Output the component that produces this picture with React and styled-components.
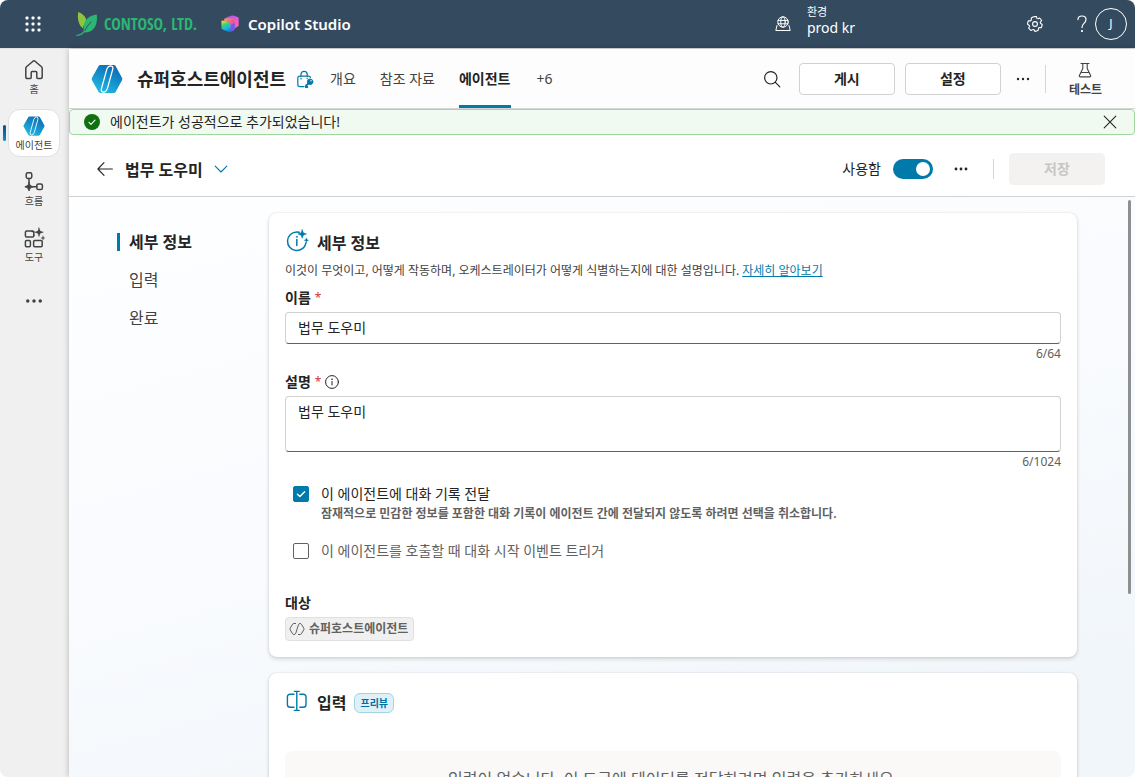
import { useState } from "react"
import styled, { createGlobalStyle } from "styled-components"

const GlobalStyle = createGlobalStyle`
  * {
    box-sizing: border-box;
  }

  body {
    margin: 0;
    background: #fff;
    color: #242424;
    font-family: "Noto Sans", "Noto Sans CJK KR", sans-serif;
    font-size: 14px;
    line-height: 20px;
  }

  button, input, textarea {
    font: inherit;
    color: inherit;
  }

  svg {
    display: block;
    flex: none;
  }
`

/* ---------- icons ---------- */

const Icon = ({ size = 20, box = 20, width = 1.2, children }) => (
  <svg
    width={size}
    height={size}
    viewBox={`0 0 ${box} ${box}`}
    fill='none'
    stroke='currentColor'
    strokeWidth={width}
    strokeLinecap='round'
    strokeLinejoin='round'
    aria-hidden='true'
  >
    {children}
  </svg>
)

const WaffleIcon = () => (
  <svg width='18' height='18' viewBox='0 0 18 18' fill='#fff' aria-hidden='true'>
    {[3, 9, 15].map((y) =>
      [3, 9, 15].map((x) => <rect key={`${x}-${y}`} x={x - 1.5} y={y - 1.5} width='3' height='3' rx='1' />)
    )}
  </svg>
)

const LeafLogo = () => (
  <svg width='22' height='26' viewBox='0 0 22 26' aria-hidden='true'>
    <path d='M2.2 1C7.5 3 10.8 6.6 10.4 11.2C8.3 13 7.2 15 6.7 17.2C2.3 13.4 1.2 7.4 2.2 1Z' fill='#8cc63f' />
    <path d='M20.8 3.6C21.8 12.8 18.8 21.4 9.6 21.4C8.9 21.4 8.4 21.3 7.9 21.1C6 13 10.4 4.4 20.8 3.6Z' fill='#2bb673' />
    <path d='M15.4 10.6C12.4 13.4 10.2 17 8.3 20.4' fill='none' stroke='#344a5f' strokeWidth='0.9' />
    <path d='M8.6 20.2C6.8 22.8 4.4 24.2 1 24.4' fill='none' stroke='#2bb673' strokeWidth='1.3' strokeLinecap='round' />
  </svg>
)

const CopilotLogo = () => (
  <svg width='18' height='18' viewBox='0 0 18 18' aria-hidden='true'>
    <defs>
      <linearGradient id='cpPink' x1='0' y1='0' x2='1' y2='1'>
        <stop offset='0' stopColor='#8b5cf6' />
        <stop offset='0.6' stopColor='#e85bd0' />
        <stop offset='1' stopColor='#ff6a8b' />
      </linearGradient>
      <linearGradient id='cpMid' x1='0' y1='0' x2='1' y2='1'>
        <stop offset='0' stopColor='#ff9b5c' />
        <stop offset='0.5' stopColor='#f5588f' />
        <stop offset='1' stopColor='#b44bea' />
      </linearGradient>
      <linearGradient id='cpFront' x1='0.3' y1='0' x2='0.7' y2='1'>
        <stop offset='0' stopColor='#f2d23c' />
        <stop offset='0.35' stopColor='#35d07f' />
        <stop offset='0.65' stopColor='#18b9e6' />
        <stop offset='1' stopColor='#1479e0' />
      </linearGradient>
    </defs>
    <path d='M5.4 2.2L11 0.6Q12 0.3 12.9 0.7L16.6 1.9Q17.7 2.3 17.7 3.4V10Q17.7 11 16.8 11.6L13.6 13.6L5 7Z' fill='url(#cpPink)' />
    <path d='M3.2 4.4Q3.5 3.4 4.6 3.3H11.4Q13.4 3.5 13.8 5.4V13.4L9 15L3 8Z' fill='url(#cpMid)' />
    <path d='M9.6 9.6V16Q9.6 17.3 8.8 17.3L12.8 15.4Q13.8 14.8 13.8 13.4V8.2Z' fill='#7a55f0' />
    <path d='M1.8 5.6L5.6 6.4Q9.4 7.2 9.6 9.6V16Q9.6 17.6 8.2 17.1L1.6 14.4Q0.4 13.9 0.4 12.6V6.8Q0.4 5.3 1.8 5.6Z' fill='url(#cpFront)' />
  </svg>
)

const HexLogo = ({ size }) => (
  <svg width={size} height={size} viewBox='0 0 32 32' aria-hidden='true'>
    <defs>
      <linearGradient id='hexFill' x1='0.8' y1='0' x2='0.25' y2='1'>
        <stop offset='0' stopColor='#0d66b0' />
        <stop offset='0.5' stopColor='#1490cb' />
        <stop offset='1' stopColor='#22bde4' />
      </linearGradient>
    </defs>
    <path d='M9.4 2H22.8Q24 2 24.6 3.1L31 14.8Q31.7 16 31 17.2L24.6 28.9Q24 30 22.8 30H9.4Q8.2 30 7.6 28.9L1 17.2Q0.3 16 1 14.8L7.6 3.1Q8.2 2 9.4 2Z' fill='url(#hexFill)' />
    <path
      d='M15.8 6.4Q17 2.8 19.8 2.8Q22.6 3 21.7 6.4L16.4 25.4Q15.2 29 12.4 29.2Q9.6 29 10.5 25.4Z'
      fill='none'
      stroke='#fff'
      strokeWidth='1.3'
    />
  </svg>
)

const HexOutline = () => (
  <Icon size={16} box={16} width={1}>
    <path d='M6.6 2.5H5Q4 2.5 3.6 3.2L1.2 7.2Q0.8 8 1.2 8.8L3.5 12.7Q4 13.5 5 13.5Q6.3 13.5 6.8 12.2L9.4 3.8Q9.8 2.5 11 2.5Q12 2.5 12.5 3.3L14.8 7.2Q15.2 8 14.8 8.8L12.4 12.8Q12 13.5 11 13.5H9.4' />
  </Icon>
)

const GlobeIcon = () => (
  <Icon size={16} box={16} width={1}>
    <circle cx='8' cy='6' r='5.2' />
    <ellipse cx='8' cy='6' rx='2.2' ry='5.2' />
    <path d='M3 4.4H13M3 7.8H13' />
    <path d='M2 9.5L0.8 14.5H15.2L14 9.5' />
  </Icon>
)

const GearIcon = () => (
  <Icon size={18} box={24} width={1.5}>
    <circle cx='12' cy='12' r='3.2' />
    <path d='M12 2Q13 2 14 2.2L14.5 4.2Q14.9 5.3 16.1 5L18.2 4.1Q19.8 5.5 20.9 7.6L19.3 9.1Q18.5 10 19.3 11L21.6 12.6Q21.4 15 20.4 17L18.1 16.8Q16.8 16.8 16.6 18L16.3 20.4Q14.3 21.6 12 21.8L10.8 19.9Q10 18.9 8.9 19.5L6.8 20.6Q4.7 19.4 3.5 17.4L4.7 15.4Q5.2 14.2 4.1 13.6L2.1 12.4Q2.1 9.8 3.2 7.6L5.6 7.8Q6.9 7.7 7 6.5L7.1 4Q8.9 2.5 12 2Z' />
  </Icon>
)

const HelpIcon = () => (
  <Icon size={20} width={1.2}>
    <path d='M6 5.6Q6 2 10 2Q14 2 14 5.6Q14 7.6 12 9.4Q10 11.2 10 13.6' />
    <circle cx='10' cy='17' r='0.5' fill='currentColor' />
  </Icon>
)

const HomeIcon = () => (
  <Icon size={22} box={22} width={1.5}>
    <path d='M2.8 9.2Q2.8 8.3 3.5 7.7L10 2.2Q11 1.4 12 2.2L18.5 7.7Q19.2 8.3 19.2 9.2V18Q19.2 19.5 17.7 19.5H14.8Q13.8 19.5 13.8 18.5V13.4Q13.8 12.4 12.8 12.4H9.2Q8.2 12.4 8.2 13.4V18.5Q8.2 19.5 7.2 19.5H4.3Q2.8 19.5 2.8 18Z' />
  </Icon>
)

const FlowIcon = () => (
  <Icon size={22} box={22} width={1.5}>
    <rect x='3.2' y='1.8' width='5.6' height='5.6' rx='1.6' />
    <rect x='13.8' y='13' width='5.6' height='5.6' rx='1.6' />
    <path d='M6 7.4V12M9.6 15.8H13.8' />
    <path d='M6 11.6L7.3 14.5L10.2 15.8L7.3 17.1L6 20L4.7 17.1L1.8 15.8L4.7 14.5Z' fill='currentColor' strokeWidth='0.8' />
  </Icon>
)

const ToolsIcon = () => (
  <Icon size={22} box={22} width={1.5}>
    <path d='M10.8 8V8.8Q10.8 10 9.6 10H3.6Q2.4 10 2.4 8.8V5.2Q2.4 4 3.6 4H9.6' />
    <path d='M10.8 8.6V4.4H9' />
    <rect x='2.4' y='13.4' width='5' height='6.4' rx='1.2' />
    <rect x='10.6' y='13.4' width='8.6' height='6.4' rx='1.2' />
    <path d='M16 0.8L17.1 4.1L20.4 5.2L17.1 6.3L16 9.6L14.9 6.3L11.6 5.2L14.9 4.1Z' fill='currentColor' strokeWidth='0.4' />
    <path d='M20 8.8L20.6 10.4L22 11L20.6 11.6L20 13.2L19.4 11.6L17.8 11L19.4 10.4Z' fill='currentColor' strokeWidth='0.2' />
  </Icon>
)

const DotsIcon = ({ size = 16, r = 1.2 }) => (
  <svg width={size} height={size} viewBox='0 0 16 16' fill='currentColor' aria-hidden='true'>
    <circle cx='3' cy='8' r={r} />
    <circle cx='8' cy='8' r={r} />
    <circle cx='13' cy='8' r={r} />
  </svg>
)

const LockKeyIcon = () => (
  <Icon size={18} box={18} width={1.2}>
    <path d='M8 16.6H4Q1.8 16.6 1.8 14.4V8.2Q1.8 6.2 3.8 6.2H12.4Q14.4 6.2 14.4 7.6' />
    <path d='M5 6.2V4.4Q5 1.4 8.1 1.4Q11.2 1.4 11.2 4.4V6.2M5 8.2V9M11.2 8.2V8.6' />
    <circle cx='14.1' cy='11.8' r='2.8' fill='currentColor' strokeWidth='0.8' />
    <path d='M12.4 13.4L9.8 16V17H11.4' strokeWidth='1.8' />
    <circle cx='15' cy='10.8' r='0.7' fill='#fff' stroke='none' />
  </Icon>
)

const SearchIcon = () => (
  <Icon size={18} box={18} width={1.2}>
    <circle cx='7.8' cy='7.8' r='6.2' />
    <path d='M12.4 12.4L16.8 16.8' />
  </Icon>
)

const FlaskIcon = () => (
  <Icon size={16} box={16} width={1.1}>
    <path d='M4 1.5H12M5.8 1.5V6.6L2.4 13.4Q1.9 14.9 3.4 14.9H12.6Q14.1 14.9 13.6 13.4L10.2 6.6V1.5M4.2 10.5H11.8' />
  </Icon>
)

const CheckBadge = () => (
  <svg width='16' height='16' viewBox='0 0 16 16' aria-hidden='true'>
    <circle cx='8' cy='8' r='8' fill='#107010' />
    <path d='M5 8.4L7 10.4L11 6.2' fill='none' stroke='#fff' strokeWidth='1.1' strokeLinecap='round' strokeLinejoin='round' />
  </svg>
)

const CloseIcon = () => (
  <Icon size={14} box={14} width={1.1}>
    <path d='M1.2 1.2L12.8 12.8M12.8 1.2L1.2 12.8' />
  </Icon>
)

const BackIcon = () => (
  <Icon size={16} box={16} width={1.1}>
    <path d='M7 1.6L0.9 8L7 14.4M1 8H15.4' />
  </Icon>
)

const ChevronIcon = () => (
  <Icon size={14} box={14} width={1.1}>
    <path d='M1.2 4.2L7 10L12.8 4.2' />
  </Icon>
)

const InfoSparkIcon = () => (
  <Icon size={24} box={24} width={1.5}>
    <path d='M14.2 3.2Q13 2.9 11.8 2.9A9.3 9.3 0 1 0 21 13.8' />
    <path d='M11.8 10.6V16.4' />
    <circle cx='11.8' cy='7.8' r='0.5' fill='currentColor' strokeWidth='0.8' />
    <path d='M17.2 0.6L18.4 3.8L21.6 5L18.4 6.2L17.2 9.4L16 6.2L12.8 5L16 3.8Z' fill='currentColor' strokeWidth='0.4' />
    <path d='M21.4 8.8L22.1 10.5L23.8 11.2L22.1 11.9L21.4 13.6L20.7 11.9L19 11.2L20.7 10.5Z' fill='currentColor' strokeWidth='0.2' />
  </Icon>
)

const InputIcon = () => (
  <Icon size={24} box={24} width={1.4}>
    <path d='M11.8 2.6V21.4M9.4 2.4H14.2M9.4 21.4H14.2' />
    <path d='M9 5.2H5.2Q2.4 5.2 2.4 8V15.4Q2.4 18.2 5.2 18.2H9M14.8 5.2H18.2Q21 5.2 21 8V15.4Q21 18.2 18.2 18.2H14.8' />
  </Icon>
)

const InfoIcon = () => (
  <Icon size={14} box={14} width={1}>
    <circle cx='7' cy='7' r='6.4' />
    <path d='M7 6.4V10' />
    <circle cx='7' cy='4.2' r='0.4' fill='currentColor' strokeWidth='0.6' />
  </Icon>
)

/* ---------- page ---------- */

const railItems = [
  { label: "홈", icon: <HomeIcon /> },
  { label: "에이전트", icon: <HexLogo size={22} />, active: true },
  { label: "흐름", icon: <FlowIcon /> },
  { label: "도구", icon: <ToolsIcon /> },
]

const tabs = ["개요", "참조 자료", "에이전트"]
const sections = ["세부 정보", "입력", "완료"]

function TopBar() {
  return (
    <Top>
      <PlainButton aria-label='앱 시작 관리자'>
        <WaffleIcon />
      </PlainButton>
      <Contoso>
        <LeafLogo />
        <ContosoName>CONTOSO, LTD.</ContosoName>
      </Contoso>
      <Product>
        <CopilotLogo />
        Copilot Studio
      </Product>
      <Environment>
        <GlobeIcon />
        <div>
          <EnvLabel>환경</EnvLabel>
          <EnvName>prod kr</EnvName>
        </div>
      </Environment>
      <TopActions>
        <PlainButton aria-label='설정'>
          <GearIcon />
        </PlainButton>
        <HelpGroup>
          <PlainButton aria-label='도움말'>
            <HelpIcon />
          </PlainButton>
          <Avatar>J</Avatar>
        </HelpGroup>
      </TopActions>
    </Top>
  )
}

function Rail() {
  return (
    <RailNav>
      {railItems.map((item) => (
        <RailItem key={item.label} href='#' $active={item.active}>
          {item.icon}
          <span>{item.label}</span>
        </RailItem>
      ))}
      <RailItem as='button' aria-label='더 보기'>
        <DotsIcon size={20} r={1.4} />
      </RailItem>
    </RailNav>
  )
}

function AgentHeader() {
  return (
    <AgentBar>
      <HexLogo size={32} />
      <AgentName>슈퍼호스트에이전트</AgentName>
      <Accent>
        <LockKeyIcon />
      </Accent>
      <Tabs>
        {tabs.map((tab) => (
          <Tab key={tab} $active={tab === "에이전트"}>
            {tab}
          </Tab>
        ))}
        <OverflowTab>+6</OverflowTab>
      </Tabs>
      <AgentActions>
        <SearchButton aria-label='검색'>
          <SearchIcon />
        </SearchButton>
        <Button>게시</Button>
        <Button>설정</Button>
        <MoreButton aria-label='더 보기'>
          <DotsIcon />
        </MoreButton>
        <Divider $tall />
        <TestButton>
          <FlaskIcon />
          테스트
        </TestButton>
      </AgentActions>
    </AgentBar>
  )
}

function ToolHeader() {
  const [enabled, setEnabled] = useState(true)

  return (
    <ToolBar>
      <PlainButton aria-label='뒤로'>
        <BackIcon />
      </PlainButton>
      <ToolName>법무 도우미</ToolName>
      <Accent>
        <ChevronIcon />
      </Accent>
      <ToolActions>
        <SwitchLabel>
          사용함
          <Switch type='checkbox' role='switch' checked={enabled} onChange={() => setEnabled(!enabled)} />
        </SwitchLabel>
        <PlainButton aria-label='더 보기'>
          <DotsIcon r={1.4} />
        </PlainButton>
        <Divider />
        <Button disabled>저장</Button>
      </ToolActions>
    </ToolBar>
  )
}

function CheckOption({ id, label, hint, value, onChange }) {
  return (
    <Option>
      <CheckCell>
        <Check id={id} type='checkbox' checked={value} onChange={() => onChange(!value)} />
        {value && (
          <Icon size={16} box={16} width={1.4}>
            <path d='M4.4 8.2L6.9 10.6L11.6 5.8' />
          </Icon>
        )}
      </CheckCell>
      <div>
        <OptionLabel htmlFor={id} $muted={!value}>
          {label}
        </OptionLabel>
        {hint && <Hint>{hint}</Hint>}
      </div>
    </Option>
  )
}

function DetailsCard() {
  const [name, setName] = useState("법무 도우미")
  const [description, setDescription] = useState("법무 도우미")
  const [passHistory, setPassHistory] = useState(true)
  const [trigger, setTrigger] = useState(false)

  return (
    <Card>
      <CardTitle>
        <InfoSparkIcon />
        <h2>세부 정보</h2>
      </CardTitle>
      <Intro>
        이것이 무엇이고, 어떻게 작동하며, 오케스트레이터가 어떻게 식별하는지에 대한 설명입니다. <a href='#'>자세히 알아보기</a>
      </Intro>

      <Field>
        <FieldLabel htmlFor='name'>
          이름 <Star>*</Star>
        </FieldLabel>
        <TextInput id='name' value={name} onChange={(e) => setName(e.target.value)} />
        <Counter>{name.length}/64</Counter>
      </Field>

      <Field>
        <FieldLabel htmlFor='description'>
          설명 <Star>*</Star>
          <InfoIcon />
        </FieldLabel>
        <TextArea id='description' value={description} onChange={(e) => setDescription(e.target.value)} />
        <Counter>{description.length}/1024</Counter>
      </Field>

      <Options>
        <CheckOption
          id='history'
          label='이 에이전트에 대화 기록 전달'
          hint='잠재적으로 민감한 정보를 포함한 대화 기록이 에이전트 간에 전달되지 않도록 하려면 선택을 취소합니다.'
          value={passHistory}
          onChange={setPassHistory}
        />
        <CheckOption
          id='trigger'
          label='이 에이전트를 호출할 때 대화 시작 이벤트 트리거'
          value={trigger}
          onChange={setTrigger}
        />
      </Options>

      <FieldLabel as='h3'>대상</FieldLabel>
      <Chip>
        <HexOutline />
        슈퍼호스트에이전트
      </Chip>
    </Card>
  )
}

function App() {
  return (
    <Window>
      <GlobalStyle />
      <TopBar />
      <Body>
        <Rail />
        <Main>
          <AgentHeader />
          <Banner role='status'>
            <CheckBadge />
            에이전트가 성공적으로 추가되었습니다!
            <BannerClose aria-label='닫기'>
              <CloseIcon />
            </BannerClose>
          </Banner>
          <ToolHeader />
          <Content>
            <SectionNav>
              {sections.map((section, i) => (
                <SectionLink key={section} href='#' $active={i === 0}>
                  {section}
                </SectionLink>
              ))}
            </SectionNav>
            <Cards>
              <DetailsCard />
              <Card>
                <CardTitle>
                  <InputIcon />
                  <h2>입력</h2>
                  <Badge>프리뷰</Badge>
                </CardTitle>
                <Empty>입력이 없습니다. 이 도구에 데이터를 전달하려면 입력을 추가하세요.</Empty>
              </Card>
            </Cards>
            <ScrollThumb />
          </Content>
        </Main>
      </Body>
    </Window>
  )
}

export default App

const Window = styled.div`
  height: 100vh;
  display: flex;
  flex-direction: column;
  border-radius: 8px;
  overflow: hidden;
`

const PlainButton = styled.button`
  padding: 0;
  border: none;
  background: none;
  color: inherit;
  cursor: pointer;
`

const Top = styled.header`
  height: 48px;
  flex: none;
  display: flex;
  align-items: center;
  padding: 0 8px 0 24px;
  background: #344a5f;
  color: #fff;
`

const Contoso = styled.div`
  display: flex;
  align-items: center;
  gap: 6px;
  margin-left: 34px;
`

const ContosoName = styled.span`
  font-family: "Open Sans Condensed", "Roboto Condensed", "Liberation Sans Narrow", "Liberation Sans", sans-serif;
  font-size: 16px;
  font-weight: 900;
  color: #2bb673;
`

const Product = styled.div`
  display: flex;
  align-items: center;
  gap: 9px;
  margin-left: 24px;
  font-size: 15px;
  font-weight: 600;
`

const Environment = styled.div`
  display: flex;
  align-items: center;
  gap: 16px;
  margin-left: auto;
`

const EnvLabel = styled.div`
  font-size: 11px;
  line-height: 16px;
`

const EnvName = styled.div`
  margin-bottom: 8px;
  font-size: 14px;
  line-height: 16px;
`

const TopActions = styled.div`
  display: flex;
  align-items: center;
  gap: 28px;
  margin-left: 171px;
`

const HelpGroup = styled.div`
  display: flex;
  align-items: center;
  gap: 3px;
`

const Avatar = styled.button`
  width: 32px;
  height: 32px;
  padding: 0;
  border: 1px solid #fff;
  border-radius: 50%;
  background: none;
  font-size: 12px;
`

const Body = styled.div`
  flex: 1;
  min-height: 0;
  display: flex;
  border-top: 1px solid #e0e0e0;
`

const RailNav = styled.nav`
  flex: none;
  width: 69px;
  display: flex;
  flex-direction: column;
  align-items: center;
  gap: 8px;
  padding: 4px 1px 0 0;
  background: #f0f0f0;
`

const RailItem = styled.a`
  position: relative;
  width: 52px;
  height: 48px;
  display: flex;
  flex-direction: column;
  align-items: center;
  justify-content: center;
  gap: 1px;
  border: 1px solid ${(props) => (props.$active ? "#e0e0e0" : "transparent")};
  border-radius: 12px;
  background: ${(props) => (props.$active ? "#fff" : "none")};
  color: #424242;
  font-size: 10px;
  line-height: 14px;
  text-decoration: none;

  &::before {
    content: "";
    display: ${(props) => (props.$active ? "block" : "none")};
    position: absolute;
    left: -6px;
    width: 3px;
    height: 16px;
    border-radius: 2px;
    background: linear-gradient(#0b4a94, #0f8fc4);
  }
`

const Main = styled.main`
  flex: 1;
  min-width: 0;
  display: flex;
  flex-direction: column;
  background: linear-gradient(165deg, #fdfeff 20%, #f9fbfe 55%, #f1f6fa 90%);
  box-shadow: 0 0 6px rgba(0, 0, 0, 0.25);
`

const AgentBar = styled.div`
  flex: none;
  height: 60px;
  display: flex;
  align-items: center;
  padding: 0 32px 0 22px;
  border-bottom: 1px solid #d6d6d6;
  background: #fdfdfd;
`

const AgentName = styled.h1`
  margin: 0 10px 0 14px;
  font-size: 18px;
  font-weight: 600;
`

const Accent = styled.span`
  color: #0078a8;
`

const Tabs = styled.div`
  align-self: stretch;
  display: flex;
  gap: 24px;
  margin-left: 16px;
`

const Tab = styled.button`
  padding: 3px 0 0;
  border: none;
  border-bottom: 3px solid ${(props) => (props.$active ? "#007aab" : "transparent")};
  background: none;
  font-weight: ${(props) => (props.$active ? 600 : 400)};
  color: ${(props) => (props.$active ? "#242424" : "#424242")};
`

const OverflowTab = styled(Tab)`
  padding-left: 2px;
`

const AgentActions = styled.div`
  display: flex;
  align-items: center;
  gap: 10px;
  margin-left: auto;
`

const SearchButton = styled(PlainButton)`
  margin-right: 8px;
`

const MoreButton = styled(PlainButton)`
  margin: 0 4px;
`

const Button = styled.button`
  width: 96px;
  height: 32px;
  border: 1px solid #d1d1d1;
  border-radius: 4px;
  background: #fff;
  font-weight: 600;

  &:disabled {
    border-color: #f3f2f1;
    background: #f3f2f1;
    color: #c8c6c4;
  }
`

const Divider = styled.span`
  width: 1px;
  height: ${(props) => (props.$tall ? "28px" : "20px")};
  background: #d6d6d6;
`

const TestButton = styled(PlainButton)`
  display: flex;
  flex-direction: column;
  align-items: center;
  gap: 2px;
  margin-left: 13px;
  padding: 4px 1px 0 0;
  color: #424242;
  font-size: 12px;
  font-weight: 600;
  line-height: 20px;
`

const Banner = styled.div`
  flex: none;
  height: 26px;
  display: flex;
  align-items: center;
  gap: 10px;
  padding: 0 17px 0 14px;
  border: 1px solid #9fd89f;
  border-radius: 4px;
  background: #f1faf1;
`

const BannerClose = styled(PlainButton)`
  margin-left: auto;
`

const ToolBar = styled.div`
  flex: none;
  height: 62px;
  display: flex;
  align-items: center;
  padding: 6px 30px 0 28px;
  border-bottom: 1px solid #d1d1d1;
  background: #fff;
`

const ToolName = styled.h2`
  margin: 2px 11px 0 12px;
  font-size: 16px;
  font-weight: 600;
`

const ToolActions = styled.div`
  display: flex;
  align-items: center;
  gap: 16px;
  margin-left: auto;

  ${Divider} {
    margin-left: 8px;
  }

  ${Button} {
    margin-left: -1px;
  }
`

const SwitchLabel = styled.label`
  display: flex;
  align-items: center;
  gap: 12px;
  margin-right: 4px;
`

const Switch = styled.input`
  appearance: none;
  width: 40px;
  height: 20px;
  margin: 0;
  padding: 3px;
  display: flex;
  justify-content: ${(props) => (props.checked ? "flex-end" : "flex-start")};
  border-radius: 10px;
  background: ${(props) => (props.checked ? "#007aab" : "#8a8886")};

  &::before {
    content: "";
    width: 14px;
    height: 14px;
    border-radius: 50%;
    background: #fff;
  }
`

const Content = styled.div`
  position: relative;
  flex: 1;
  min-height: 0;
  display: flex;
  padding: 16px 58px 0 48px;
  overflow: hidden;
`

const SectionNav = styled.nav`
  flex: none;
  width: 152px;
  padding-top: 20px;
  display: flex;
  flex-direction: column;
  gap: 20px;
`

const SectionLink = styled.a`
  padding-left: 9px;
  border-left: 3px solid ${(props) => (props.$active ? "#007aab" : "transparent")};
  font-size: 16px;
  line-height: 18px;
  font-weight: ${(props) => (props.$active ? 600 : 400)};
  color: ${(props) => (props.$active ? "#242424" : "#424242")};
  text-decoration: none;
`

const Cards = styled.div`
  flex: 1;
  min-width: 0;
  display: flex;
  flex-direction: column;
  gap: 16px;
`

const Card = styled.section`
  flex: none;
  padding: 16px;
  border-radius: 8px;
  background: #fff;
  box-shadow: 0 0 2px rgba(0, 0, 0, 0.12), 0 2px 4px rgba(0, 0, 0, 0.14);
`

const CardTitle = styled.div`
  height: 24px;
  display: flex;
  align-items: center;
  gap: 8px;
  margin-bottom: 9px;
  color: #007aab;

  h2 {
    margin: 4px 0 0;
    font-size: 16px;
    font-weight: 600;
    color: #242424;
  }
`

const Intro = styled.p`
  margin: 0;
  font-size: 12px;
  line-height: 18px;
  color: #424242;

  a {
    color: #007aab;
  }
`

const Field = styled.div`
  display: flex;
  flex-direction: column;
  margin-top: 8px;
`

const FieldLabel = styled.label`
  display: flex;
  align-items: center;
  gap: 4px;
  margin: 0 0 4px;
  font-size: 14px;
  font-weight: 600;
`

const Star = styled.span`
  font-size: 12px;
  font-weight: 400;
  color: #d13438;
`

const TextInput = styled.input`
  height: 32px;
  padding: 0 12px 2px;
  border: 1px solid #d1d1d1;
  border-bottom-color: #616161;
  border-radius: 4px;
  background: #fff;
`

const TextArea = styled.textarea`
  height: 56px;
  padding: 5px 12px;
  border: 1px solid #d1d1d1;
  border-bottom-color: #616161;
  border-radius: 4px;
  background: #fff;
  resize: none;
`

const Counter = styled.span`
  align-self: flex-end;
  font-size: 12px;
  color: #616161;
`

const Options = styled.div`
  display: flex;
  flex-direction: column;
  gap: 17px;
  margin: 12px 0 32px;
  padding-left: 8px;
`

const Option = styled.div`
  display: flex;
  gap: 12px;
`

const CheckCell = styled.span`
  display: grid;
  margin-top: 2px;
  width: 16px;
  height: 16px;
  color: #fff;

  > * {
    grid-area: 1 / 1;
  }

  svg {
    pointer-events: none;
  }
`

const Check = styled.input`
  appearance: none;
  width: 16px;
  height: 16px;
  margin: 0;
  border: 1px solid ${(props) => (props.checked ? "#007aab" : "#616161")};
  border-radius: 2px;
  background: ${(props) => (props.checked ? "#007aab" : "#fff")};
`

const OptionLabel = styled.label`
  display: block;
  color: ${(props) => (props.$muted ? "#616161" : "#242424")};
`

const Hint = styled.div`
  font-size: 12px;
  font-weight: 600;
  color: #616161;
`

const Chip = styled.span`
  width: fit-content;
  height: 24px;
  display: flex;
  align-items: center;
  gap: 4px;
  padding: 0 5px 0 3px;
  border: 1px solid #e0e0e0;
  border-radius: 4px;
  background: #f0f0f0;
  font-size: 12px;
  font-weight: 600;
  color: #616161;
`

const Badge = styled.span`
  height: 20px;
  margin-top: 4px;
  padding: 0 5px;
  border: 1px solid #a3d4e6;
  border-radius: 6px;
  background: #def1f9;
  font-size: 10px;
  line-height: 18px;
  font-weight: 600;
  color: #00709e;
`

const Empty = styled.p`
  margin: 38px 0 0;
  padding: 18px;
  border-radius: 8px;
  background: #faf9f8;
  font-size: 16px;
  text-align: center;
  color: #616161;
`

const ScrollThumb = styled.div`
  position: absolute;
  top: 3px;
  right: 4px;
  width: 3px;
  height: 68%;
  border-radius: 2px;
  background: #8f8f8f;
`
